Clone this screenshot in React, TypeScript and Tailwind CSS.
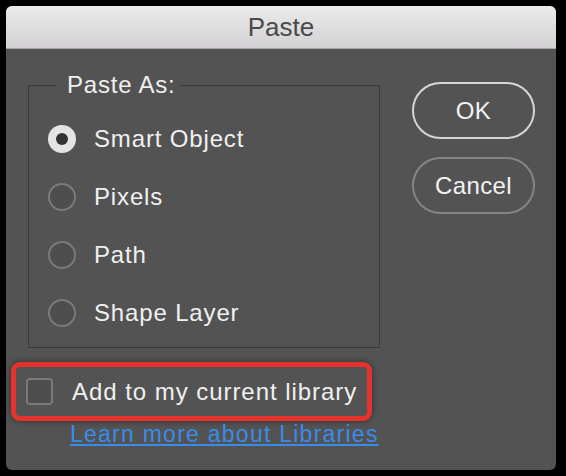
import { useState } from 'react'

const options = ['Smart Object', 'Pixels', 'Path', 'Shape Layer']

export default function App() {
  const [selected, setSelected] = useState('Smart Object')
  const [addToLibrary, setAddToLibrary] = useState(false)

  return (
    <div className="w-[566px] h-[476px] bg-black p-[6px] font-['Liberation_Sans',Arial,sans-serif]">
      <div className="w-[550px] h-[464px] rounded-[6px] overflow-hidden bg-[#535353] flex flex-col">
        {/* Title bar */}
        <div className="h-[43px] shrink-0 flex items-center justify-center bg-gradient-to-b from-[#ecebec] to-[#d3d1d3] border-b border-[#a9a9a9] text-[26px] text-[#4a4a4a]">
          Paste
        </div>

        <div className="flex pl-[22px] pr-[21px] pt-[22px]">
          {/* Left column */}
          <div className="flex flex-col w-[352px]">
            <fieldset className="border border-[#3a3a3a] pl-[19px] pt-[11px] pb-[5px]">
              <legend className="ml-[8px] pl-[11px] pr-[4px] leading-[28px] text-[24px] tracking-[0.8px] text-[#f0f0f0]">
                Paste As:
              </legend>
              {options.map((opt) => (
                <label key={opt} className="flex items-center gap-[18px] h-[58px] cursor-default">
                  <button
                    type="button"
                    onClick={() => setSelected(opt)}
                    className={
                      selected === opt
                        ? 'w-[28px] h-[28px] rounded-full bg-[#e4e4e4] flex items-center justify-center'
                        : 'w-[28px] h-[28px] rounded-full border-2 border-[#7a7a7a] bg-[#4e4e4e]'
                    }
                  >
                    {selected === opt && <span className="w-[12px] h-[12px] rounded-full bg-[#333]" />}
                  </button>
                  <span className="text-[24px] tracking-[0.85px] text-[#f0f0f0]">{opt}</span>
                </label>
              ))}
            </fieldset>

            {/* Library option, highlighted */}
            <div className="mt-[14px] -ml-[17px] w-[361px] h-[59px] border-[5px] border-[#e6322c] rounded-[9px] pl-[10px] flex items-center gap-[19px] shadow-[0_0_6px_rgba(0,0,0,0.45)]">
              <button
                type="button"
                onClick={() => setAddToLibrary(!addToLibrary)}
                className="w-[27px] h-[27px] rounded-[4px] border-2 border-[#7a7a7a] bg-[#4e4e4e] flex items-center justify-center text-[#efefef] text-[18px]"
              >
                {addToLibrary ? '✓' : ''}
              </button>
              <span className="text-[24px] tracking-[0.95px] text-[#f0f0f0]">Add to my current library</span>
            </div>

            <a href="#" className="ml-[42px] leading-[26px] text-[23px] tracking-[1.25px] text-[#3a8ce8] underline">
              Learn more about Libraries
            </a>
          </div>

          {/* Buttons */}
          <div className="ml-[32px] mt-[11px] flex flex-col gap-[18px]">
            <button className="w-[123px] h-[57px] rounded-full border-2 border-[#d6d6d6] text-[24px] tracking-[0.4px] text-[#f2f2f2]">
              OK
            </button>
            <button className="w-[123px] h-[57px] rounded-full border-2 border-[#858585] text-[24px] tracking-[0.4px] text-[#f2f2f2]">
              Cancel
            </button>
          </div>
        </div>
      </div>
    </div>
  )
}
